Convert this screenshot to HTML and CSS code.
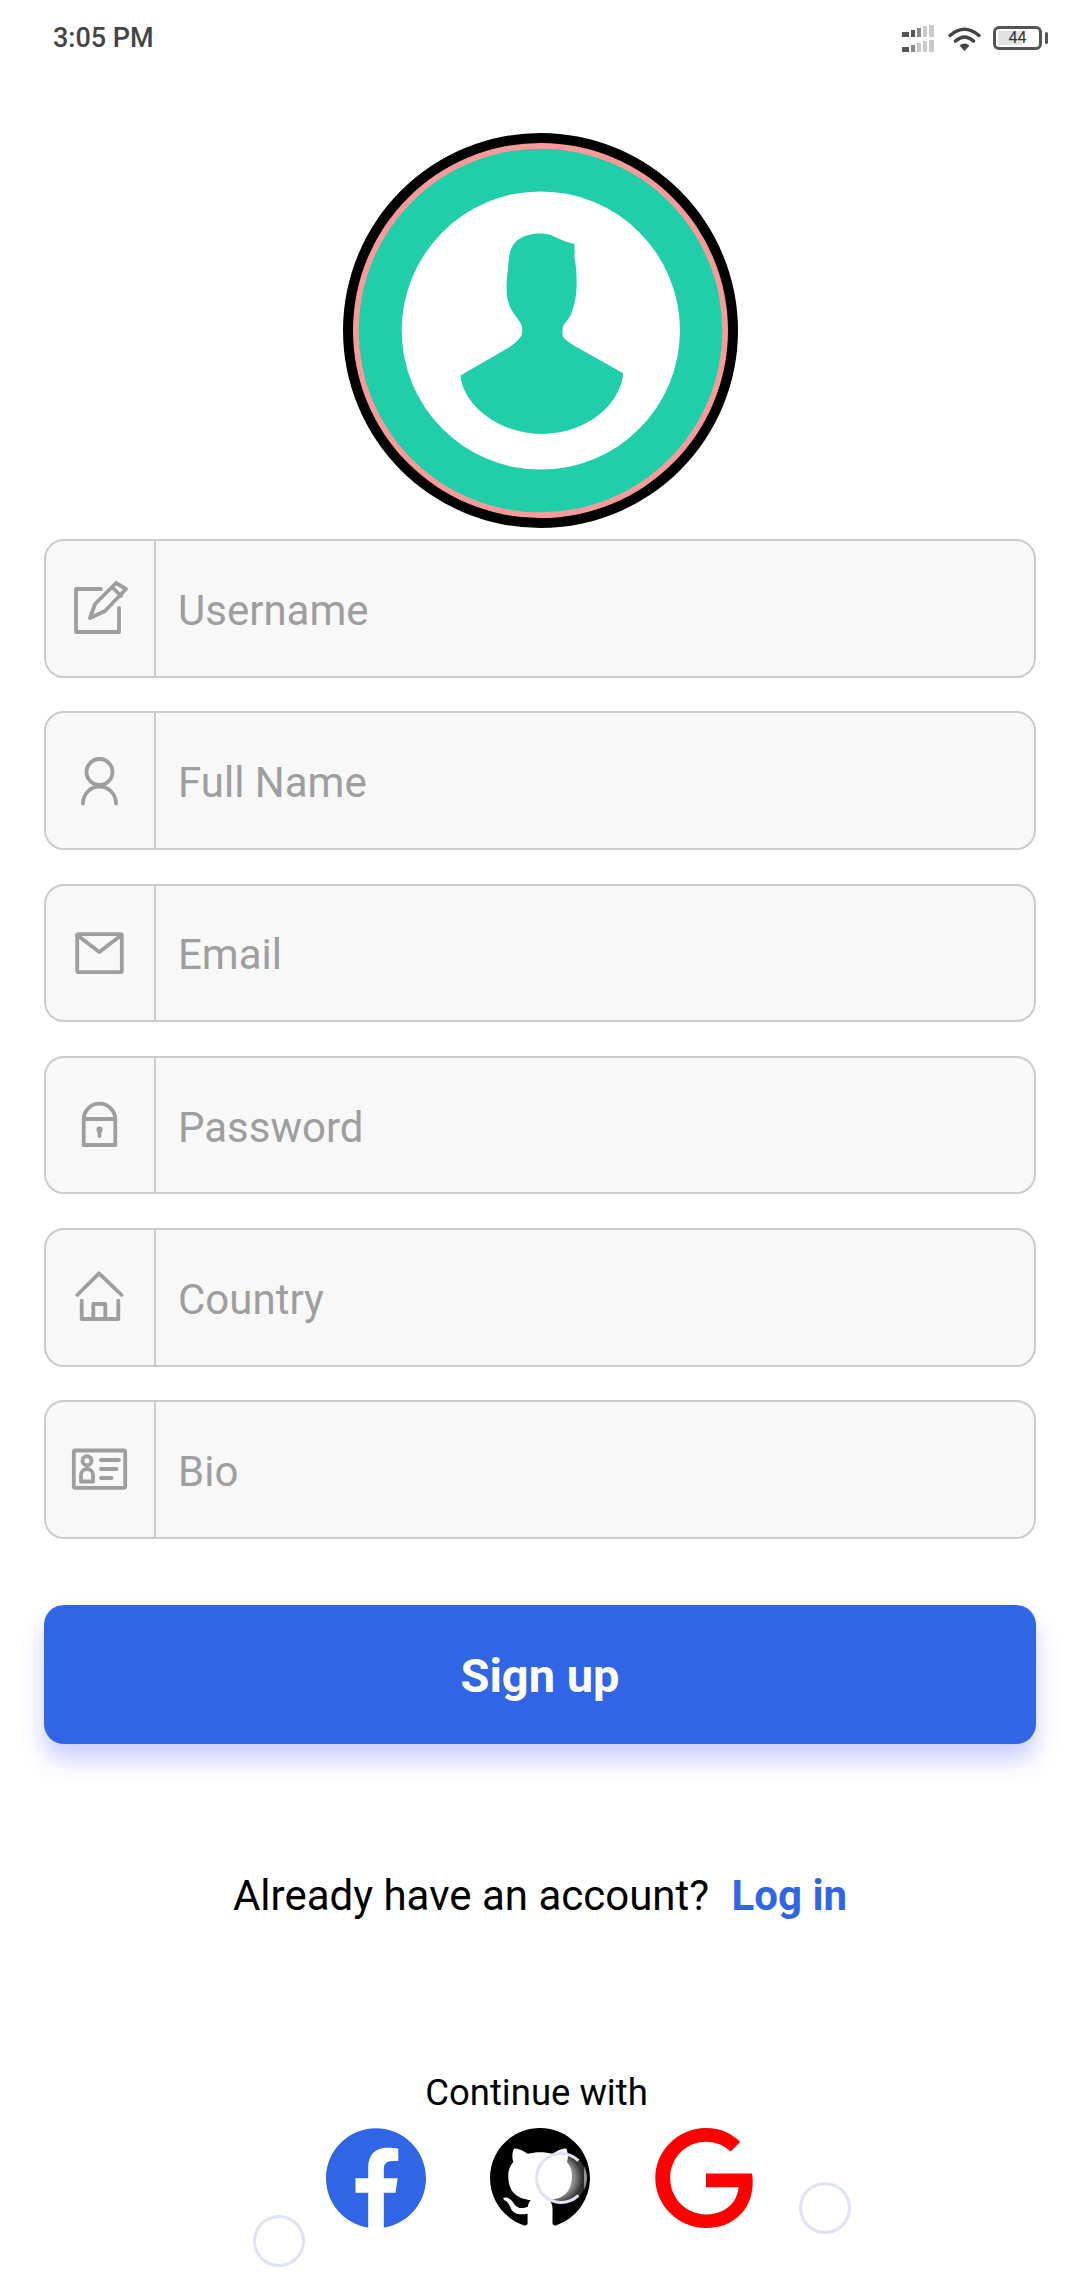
FILE: index.html
```html
<!DOCTYPE html>
<html lang="en">
<head>
  <meta charset="UTF-8">
  <meta name="viewport" content="width=device-width, initial-scale=1.0">
  <title>Sign up</title>
  <link rel="stylesheet" href="styles.css">
</head>
<body>
  <div class="status-bar">
    <span class="status-time">3:05 PM</span>
    <div class="status-icons">
      <svg class="signal" width="34" height="27" viewBox="0 0 34 27">
        <g fill="#555">
          <rect x="0" y="7" width="7" height="5"/><rect x="9" y="5" width="4" height="7"/>
          <rect x="0" y="22" width="7" height="5"/>
        </g>
        <g fill="#8a8a8a"><rect x="15" y="3" width="4" height="9"/><rect x="9" y="20" width="4" height="7"/></g>
        <g fill="#c9c9c9">
          <rect x="21" y="1" width="4" height="11"/><rect x="27" y="0" width="5" height="12"/>
          <rect x="15" y="18" width="4" height="9"/><rect x="21" y="16" width="4" height="11"/><rect x="27" y="15" width="5" height="12"/>
        </g>
      </svg>
      <svg class="wifi" width="33" height="25" viewBox="0 0 33 25">
        <path d="M2 9.5Q16.5-3 31 9.5M7.5 15Q16.5 7 25.5 15" fill="none" stroke="#444" stroke-width="3.4" stroke-linecap="round"/>
        <path d="M11.5 19.5Q16.5 15.5 21.5 19.5L16.5 25Z" fill="#444"/>
      </svg>
      <div class="battery">44</div>
    </div>
  </div>

  <svg class="avatar" width="395" height="395" viewBox="68 38 1184 1184">
    <circle cx="660" cy="630" r="592" fill="#000"/>
    <circle cx="660" cy="630" r="562" fill="#f89a9a"/>
    <circle cx="660" cy="630" r="545" fill="#20cfaa"/>
    <circle cx="661" cy="630" r="417" fill="#fff"/>
    <path fill="#20cfaa" d="M762 370C745 368 720 358 695 345C660 335 620 338 590 360C570 378 565 400 563 440C558 480 555 520 565 550C572 575 595 595 604 615C606 630 606 645 598 652C585 668 575 675 560 684L420 765C428 850 530 940 664 940C800 940 900 850 908 758L772 682C755 672 735 660 727 648C725 635 725 625 730 612C742 600 752 585 757 565C770 530 772 470 762 410Z"/>
  </svg>

  <form class="signup-form">
    <div class="field">
      <div class="field-icon">
        <svg width="60" height="60" viewBox="0 0 60 60"><path d="M31 11H6V54H49V30M20 40L25 26L46 5L56 11L35 33ZM42 9L51 18"/></svg>
      </div>
      <input type="text" placeholder="Username">
    </div>
    <div class="field">
      <div class="field-icon">
        <svg width="60" height="60" viewBox="0 0 60 60"><circle cx="29.5" cy="21" r="13"/><path d="M13 52.5a16.5 17 0 0 1 33 0"/></svg>
      </div>
      <input type="text" placeholder="Full Name">
    </div>
    <div class="field">
      <div class="field-icon">
        <svg width="60" height="60" viewBox="0 0 60 60"><rect x="7.2" y="11.2" width="44.6" height="38" rx="1.5"/><path d="M7 12L29.3 29L51.5 12"/></svg>
      </div>
      <input type="email" placeholder="Email">
    </div>
    <div class="field">
      <div class="field-icon">
        <svg width="60" height="60" viewBox="0 0 60 60"><path d="M13.7 24.5a15.8 15.8 0 0 1 31.6 0V50H13.7ZM13.7 24H45.3"/><path d="M29.5 35V41"/><circle cx="29.5" cy="34.7" r="1.2"/></svg>
      </div>
      <input type="password" placeholder="Password">
    </div>
    <div class="field">
      <div class="field-icon">
        <svg width="60" height="60" viewBox="0 0 60 60"><path d="M7.3 28L29 6.3L51.7 28M11.7 33.7V52H48.3V33.7M23.3 51V37H35.3V51"/></svg>
      </div>
      <input type="text" placeholder="Country">
    </div>
    <div class="field">
      <div class="field-icon">
        <svg width="60" height="60" viewBox="0 0 60 60"><rect x="3.8" y="10.5" width="51.4" height="37.3" rx="1.5"/><circle cx="17" cy="20.7" r="4.5"/><path d="M11 41.5V35a6 6 0 0 1 12 0v6.5ZM31 20H49M31 29H46.5M31 38H41.5"/></svg>
      </div>
      <input type="text" placeholder="Bio">
    </div>
    <button type="button" class="signup-btn">Sign up</button>
  </form>

  <p class="login-row">Already have an account? <a href="#" class="login-link">Log in</a></p>

  <p class="continue-label">Continue with</p>
  <div class="socials">
    <svg width="100" height="100" viewBox="0 0 24 24"><path fill="#3066e5" d="M24 12.073c0-6.627-5.373-12-12-12s-12 5.373-12 12c0 5.99 4.388 10.954 10.125 11.854v-8.385H7.078v-3.47h3.047V9.43c0-3.007 1.792-4.669 4.533-4.669 1.312 0 2.686.235 2.686.235v2.953H15.83c-1.491 0-1.956.925-1.956 1.874v2.25h3.328l-.532 3.47h-2.796v8.385C19.612 23.027 24 18.062 24 12.073z"/></svg>
    <svg width="100" height="100" viewBox="0 0 16 16"><path fill="#000" d="M8 0C3.58 0 0 3.58 0 8c0 3.54 2.29 6.53 5.47 7.59.4.07.55-.17.55-.38 0-.19-.01-.82-.01-1.49-2.01.37-2.53-.49-2.69-.94-.09-.23-.48-.94-.82-1.13-.28-.15-.68-.52-.01-.53.63-.01 1.08.58 1.23.82.72 1.21 1.87.87 2.33.66.07-.52.28-.87.51-1.07-1.78-.2-3.64-.89-3.64-3.95 0-.87.31-1.59.82-2.15-.08-.2-.36-1.02.08-2.12 0 0 .67-.21 2.2.82.64-.18 1.32-.27 2-.27.68 0 1.36.09 2 .27 1.53-1.04 2.2-.82 2.2-.82.44 1.1.16 1.92.08 2.12.51.56.82 1.27.82 2.15 0 3.07-1.87 3.75-3.65 3.95.29.25.54.73.54 1.48 0 1.07-.01 1.93-.01 2.2 0 .21.15.46.55.38A8.013 8.013 0 0016 8c0-4.42-3.58-8-8-8z"/></svg>
    <svg width="100" height="100" viewBox="0 0 24 24"><path fill="#ff0000" d="M12.48 10.92v3.28h7.84c-.24 1.84-.853 3.187-1.787 4.133-1.147 1.147-2.933 2.4-6.053 2.4-4.827 0-8.6-3.893-8.6-8.72s3.773-8.72 8.6-8.72c2.6 0 4.507 1.027 5.907 2.347l2.307-2.307C18.747 1.44 16.133 0 12.48 0 5.867 0 .307 5.387.307 12s5.56 12 12.173 12c3.573 0 6.267-1.173 8.373-3.36 2.16-2.16 2.84-5.213 2.84-7.667 0-.76-.053-1.467-.173-2.053H12.48z"/></svg>
  </div>

  <div class="bubble bubble-left"></div>
  <div class="bubble bubble-mid"></div>
  <div class="bubble bubble-right"></div>
</body>
</html>
```

FILE: styles.css
```css
* {
  box-sizing: border-box;
}

body {
  position: relative;
  margin: 0;
  height: 2280px;
  overflow: hidden;
  background: #fff;
  font-family: Roboto, sans-serif;
}

.status-bar {
  display: flex;
  align-items: center;
  justify-content: space-between;
  height: 76px;
  padding: 0 32px 0 53px;
}

.status-time {
  font-size: 27px;
  font-weight: 500;
  color: #444;
}

.status-icons {
  display: flex;
  align-items: center;
  gap: 12px;
}

.battery {
  position: relative;
  width: 49px;
  height: 24px;
  margin-right: 6px;
  border: 3px solid #555;
  border-radius: 6px;
  background: linear-gradient(to right, #e2e2e2 60%, transparent 60%);
  background-clip: content-box;
  padding: 2px;
  font-size: 16px;
  line-height: 14px;
  text-align: center;
  color: #333;
}

.battery::after {
  content: "";
  position: absolute;
  right: -9px;
  top: 3px;
  width: 3px;
  height: 12px;
  border-radius: 2px;
  background: #555;
}

.avatar {
  display: block;
  margin: 57px auto 11px;
}

.signup-form {
  display: flex;
  flex-direction: column;
  gap: 33.8px;
  padding: 0 44px;
}

.field {
  display: flex;
  height: 138.5px;
  border: 2.5px solid #ccc;
  border-radius: 20px;
  background: #f8f8f8;
  overflow: hidden;
}

.field-icon {
  display: flex;
  align-items: center;
  justify-content: center;
  flex: none;
  width: 110px;
  border-right: 2.5px solid #ccc;
}

.field-icon svg {
  fill: none;
  stroke: #9e9e9e;
  stroke-width: 3.8;
  stroke-linecap: round;
  stroke-linejoin: round;
}

.field input {
  flex: 1;
  min-width: 0;
  padding: 4px 0 0 22px;
  border: none;
  outline: none;
  background: transparent;
  font-family: Roboto, sans-serif;
  font-size: 42px;
  color: #333;
}

.field input::placeholder {
  color: #9e9e9e;
  opacity: 1;
}

.signup-btn {
  height: 139px;
  margin-top: 32px;
  padding-top: 4px;
  border: none;
  border-radius: 20px;
  background-color: #3066e5;
  box-shadow: 0 16px 24px rgba(70, 80, 240, 0.28);
  color: #fff;
  font-family: Roboto, sans-serif;
  font-size: 47px;
  font-weight: 700;
}

.login-row {
  margin: 127px 0 0;
  font-size: 42px;
  line-height: 50px;
  text-align: center;
  color: #000;
}

.login-link {
  margin-left: 12px;
  font-weight: 700;
  color: #3066e5;
  text-decoration: none;
}

.continue-label {
  margin: 150px 0 13px;
  padding-right: 7px;
  font-size: 36.5px;
  line-height: 44px;
  text-align: center;
  color: #000;
}

.socials {
  display: flex;
  justify-content: center;
  gap: 64px;
}

/* decorative floating circles */
.bubble {
  position: absolute;
  width: 52px;
  height: 52px;
  border: 3px solid #e0e3f4;
  border-radius: 50%;
}

.bubble-left {
  left: 253px;
  top: 2215px;
}

.bubble-mid {
  left: 535px;
  top: 2152px;
  border-right-color: rgba(224, 227, 244, 0.12);
  background: radial-gradient(circle at 40% 50%, rgba(255, 255, 255, 0.55) 50%, rgba(255, 255, 255, 0) 85%);
}

.bubble-right {
  left: 799px;
  top: 2182px;
}
```
